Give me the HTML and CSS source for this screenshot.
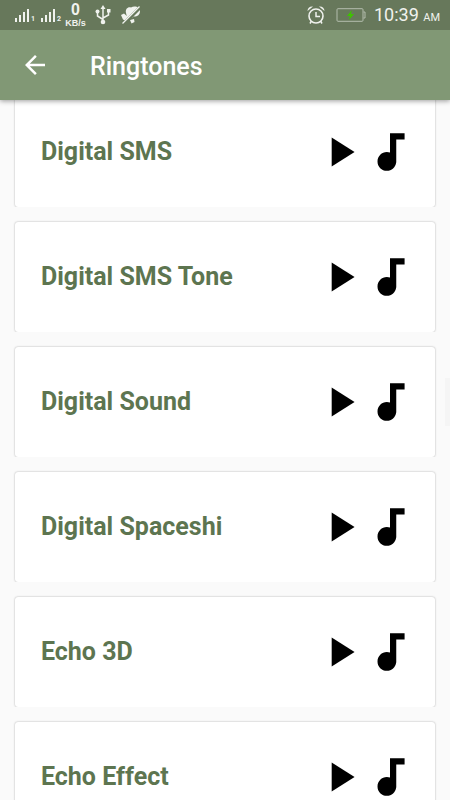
FILE: index.html
```html
<!DOCTYPE html>
<html lang="en">
<head>
<meta charset="utf-8">
<meta name="viewport" content="width=device-width, initial-scale=1">
<title>Ringtones</title>
<link rel="stylesheet" href="styles.css">
</head>
<body>
<svg class="symbols" aria-hidden="true">
  <symbol id="play" viewBox="0 0 24 24"><path d="M8 5v14l11-7z"/></symbol>
  <symbol id="note" viewBox="0 0 24 24"><path d="M12 3v9.28c-.47-.17-.97-.28-1.5-.28C8.01 12 6 14.01 6 16.5S8.01 21 10.5 21c2.31 0 4.2-1.75 4.45-4H15V6h4V3h-7z"/></symbol>
  <symbol id="bars" viewBox="0 0 16 14"><path d="M0 10h2v4H0zM4 7h2v7H4zM8 4h2v10H8zM12 1h2v13h-2z"/></symbol>
</svg>
<div class="screen">
  <div class="top">
    <div class="status">
      <div class="status-group">
        <span class="signal"><svg class="bars"><use href="#bars"/></svg><small>1</small></span>
        <span class="signal"><svg class="bars"><use href="#bars"/></svg><small>2</small></span>
        <span class="speed"><b>0</b><span>KB/s</span></span>
        <svg class="usb" viewBox="0 0 16 20"><path d="M8 3v14M8 14.500L2.500 11V7M8 13l5.500-3V6" fill="none" stroke="currentColor" stroke-width="1.500"/><path d="M8 0l2.500 4h-5zM12 4h3.500v3.500H12z"/><circle cx="2.500" cy="6.500" r="2"/><circle cx="8" cy="17" r="2.300"/></svg>
        <svg class="muted" viewBox="0 0 22 20"><path d="M6 8C5 4 8 1.500 11 2.500c3-2 9-1 9 3.500 0 4-3 6-7 5.500l-1 1.500-5-1z"/><path d="M1 10l3-1.500 4 3.500-2 4-3-1.500z"/><path d="M10 15l4-1 .5 3-3 1.500z"/><path d="M3.500 19L20.500 2" stroke="#67785b" stroke-width="3.500"/><path d="M2.500 18.500L19.500 1.500" stroke="currentColor" stroke-width="1.300"/></svg>
      </div>
      <div class="status-group">
        <svg class="alarm" viewBox="0 0 18 20"><circle cx="9" cy="11" r="7" fill="none" stroke="currentColor" stroke-width="1.600"/><path d="M9 7v4.500h4M4.500 16L3 18.500M13.500 16l1.500 2.500" fill="none" stroke="currentColor" stroke-width="1.500"/><path d="M.500 6C.500 3 3 1 6 1.500zM17.500 6C17.500 3 15 1 12 1.500z"/></svg>
        <svg class="battery" viewBox="0 0 30 14"><rect x="1" y=".7" width="26" height="12.600" rx="1" fill="none" stroke="#b4bdae"/><path d="M27.500 4H29v6h-1.500" fill="none" stroke="#b4bdae"/><path d="M16 2l-5 6h3l-1 4 5-6h-3z" fill="#3fc200"/></svg>
        <span class="clock">10:39 <small>AM</small></span>
      </div>
    </div>
    <header class="bar">
      <button class="back" type="button" aria-label="Back"><svg viewBox="0 0 24 24"><path d="M20 11H7.830l5.590-5.590L12 4l-8 8 8 8 1.410-1.410L7.830 13H20v-2z"/></svg></button>
      <h1>Ringtones</h1>
    </header>
  </div>
  <main class="list">
    <article class="card"><h2>Digital SMS</h2><button type="button" aria-label="Play"><svg><use href="#play"/></svg></button><button type="button" aria-label="Set tone"><svg><use href="#note"/></svg></button></article>
    <article class="card"><h2>Digital SMS Tone</h2><button type="button" aria-label="Play"><svg><use href="#play"/></svg></button><button type="button" aria-label="Set tone"><svg><use href="#note"/></svg></button></article>
    <article class="card"><h2>Digital Sound</h2><button type="button" aria-label="Play"><svg><use href="#play"/></svg></button><button type="button" aria-label="Set tone"><svg><use href="#note"/></svg></button></article>
    <article class="card"><h2>Digital Spaceshi</h2><button type="button" aria-label="Play"><svg><use href="#play"/></svg></button><button type="button" aria-label="Set tone"><svg><use href="#note"/></svg></button></article>
    <article class="card"><h2>Echo 3D</h2><button type="button" aria-label="Play"><svg><use href="#play"/></svg></button><button type="button" aria-label="Set tone"><svg><use href="#note"/></svg></button></article>
    <article class="card"><h2>Echo Effect</h2><button type="button" aria-label="Play"><svg><use href="#play"/></svg></button><button type="button" aria-label="Set tone"><svg><use href="#note"/></svg></button></article>
  </main>
  <div class="thumb"></div>
</div>
</body>
</html>
```
FILE: styles.css
```css
* { box-sizing: border-box; }

body {
  margin: 0;
  background: #fafafa;
  font-family: Roboto, "Liberation Sans", sans-serif;
}

h1, h2 { margin: 0; }

svg { display: block; fill: currentColor; }

button {
  padding: 0;
  border: 0;
  background: none;
  color: inherit;
}

.symbols { position: absolute; width: 0; height: 0; }

.screen {
  position: relative;
  height: 100vh;
  overflow: hidden;
}

.top {
  position: relative;
  z-index: 1;
  background: #819875;
  color: #fff;
  box-shadow: 0 1px 5px rgba(0, 0, 0, 0.4);
}

.status {
  display: flex;
  justify-content: space-between;
  height: 30px;
  padding: 0 10px 0 15px;
  background: #67785b;
  color: #f0f2ee;
}

.status-group { display: flex; align-items: center; }

.signal {
  display: flex;
  align-items: flex-end;
  width: 26px;
}

.signal small {
  font-size: 7px;
  font-weight: 700;
  line-height: 6px;
}

.bars { width: 16px; height: 14px; }

.speed {
  display: flex;
  flex-direction: column;
  align-items: center;
  width: 21px;
  margin-left: -2px;
  font: 700 9px/10px "Liberation Sans", sans-serif;
}

.speed b { font-size: 16px; line-height: 16px; }

.usb { width: 16px; height: 20px; margin-left: 9px; }

.muted { width: 22px; height: 20px; margin-left: 9px; }

.alarm { width: 18px; height: 20px; }

.battery { width: 30px; height: 14px; margin: 0 8px 0 11px; }

.clock { font-size: 18px; line-height: 30px; padding-top: 2px; }

.clock small { font-size: 11px; }

.bar {
  display: flex;
  align-items: center;
  height: 70px;
  padding: 0 20px;
}

.back { width: 30px; height: 30px; }

.back svg { width: 30px; height: 30px; }

.bar h1 {
  margin-left: 40px;
  padding-top: 4px;
  font-size: 25px;
  font-weight: 500;
  line-height: 30px;
}

.list {
  display: flex;
  flex-direction: column;
  gap: 15px;
  margin-top: -3px;
  padding: 0 15px;
}

/* The shadow shows on the top and sides only. */
.card {
  display: flex;
  align-items: center;
  height: 110px;
  padding: 0 20px 0 26px;
  border-radius: 3px;
  background: #fff;
  box-shadow: 0 0 2px rgba(0, 0, 0, 0.35);
  clip-path: inset(-2px -2px 0 -2px);
}

.card h2 {
  flex: 1;
  color: #5d7550;
  font-size: 25px;
  font-weight: 700;
  line-height: 30px;
}

.card button { width: 50px; height: 50px; color: #000; }

.card svg { width: 50px; height: 50px; }

.thumb {
  position: absolute;
  top: 378px;
  right: 0;
  width: 5px;
  height: 48px;
  background: #f5f5f5;
}
```
